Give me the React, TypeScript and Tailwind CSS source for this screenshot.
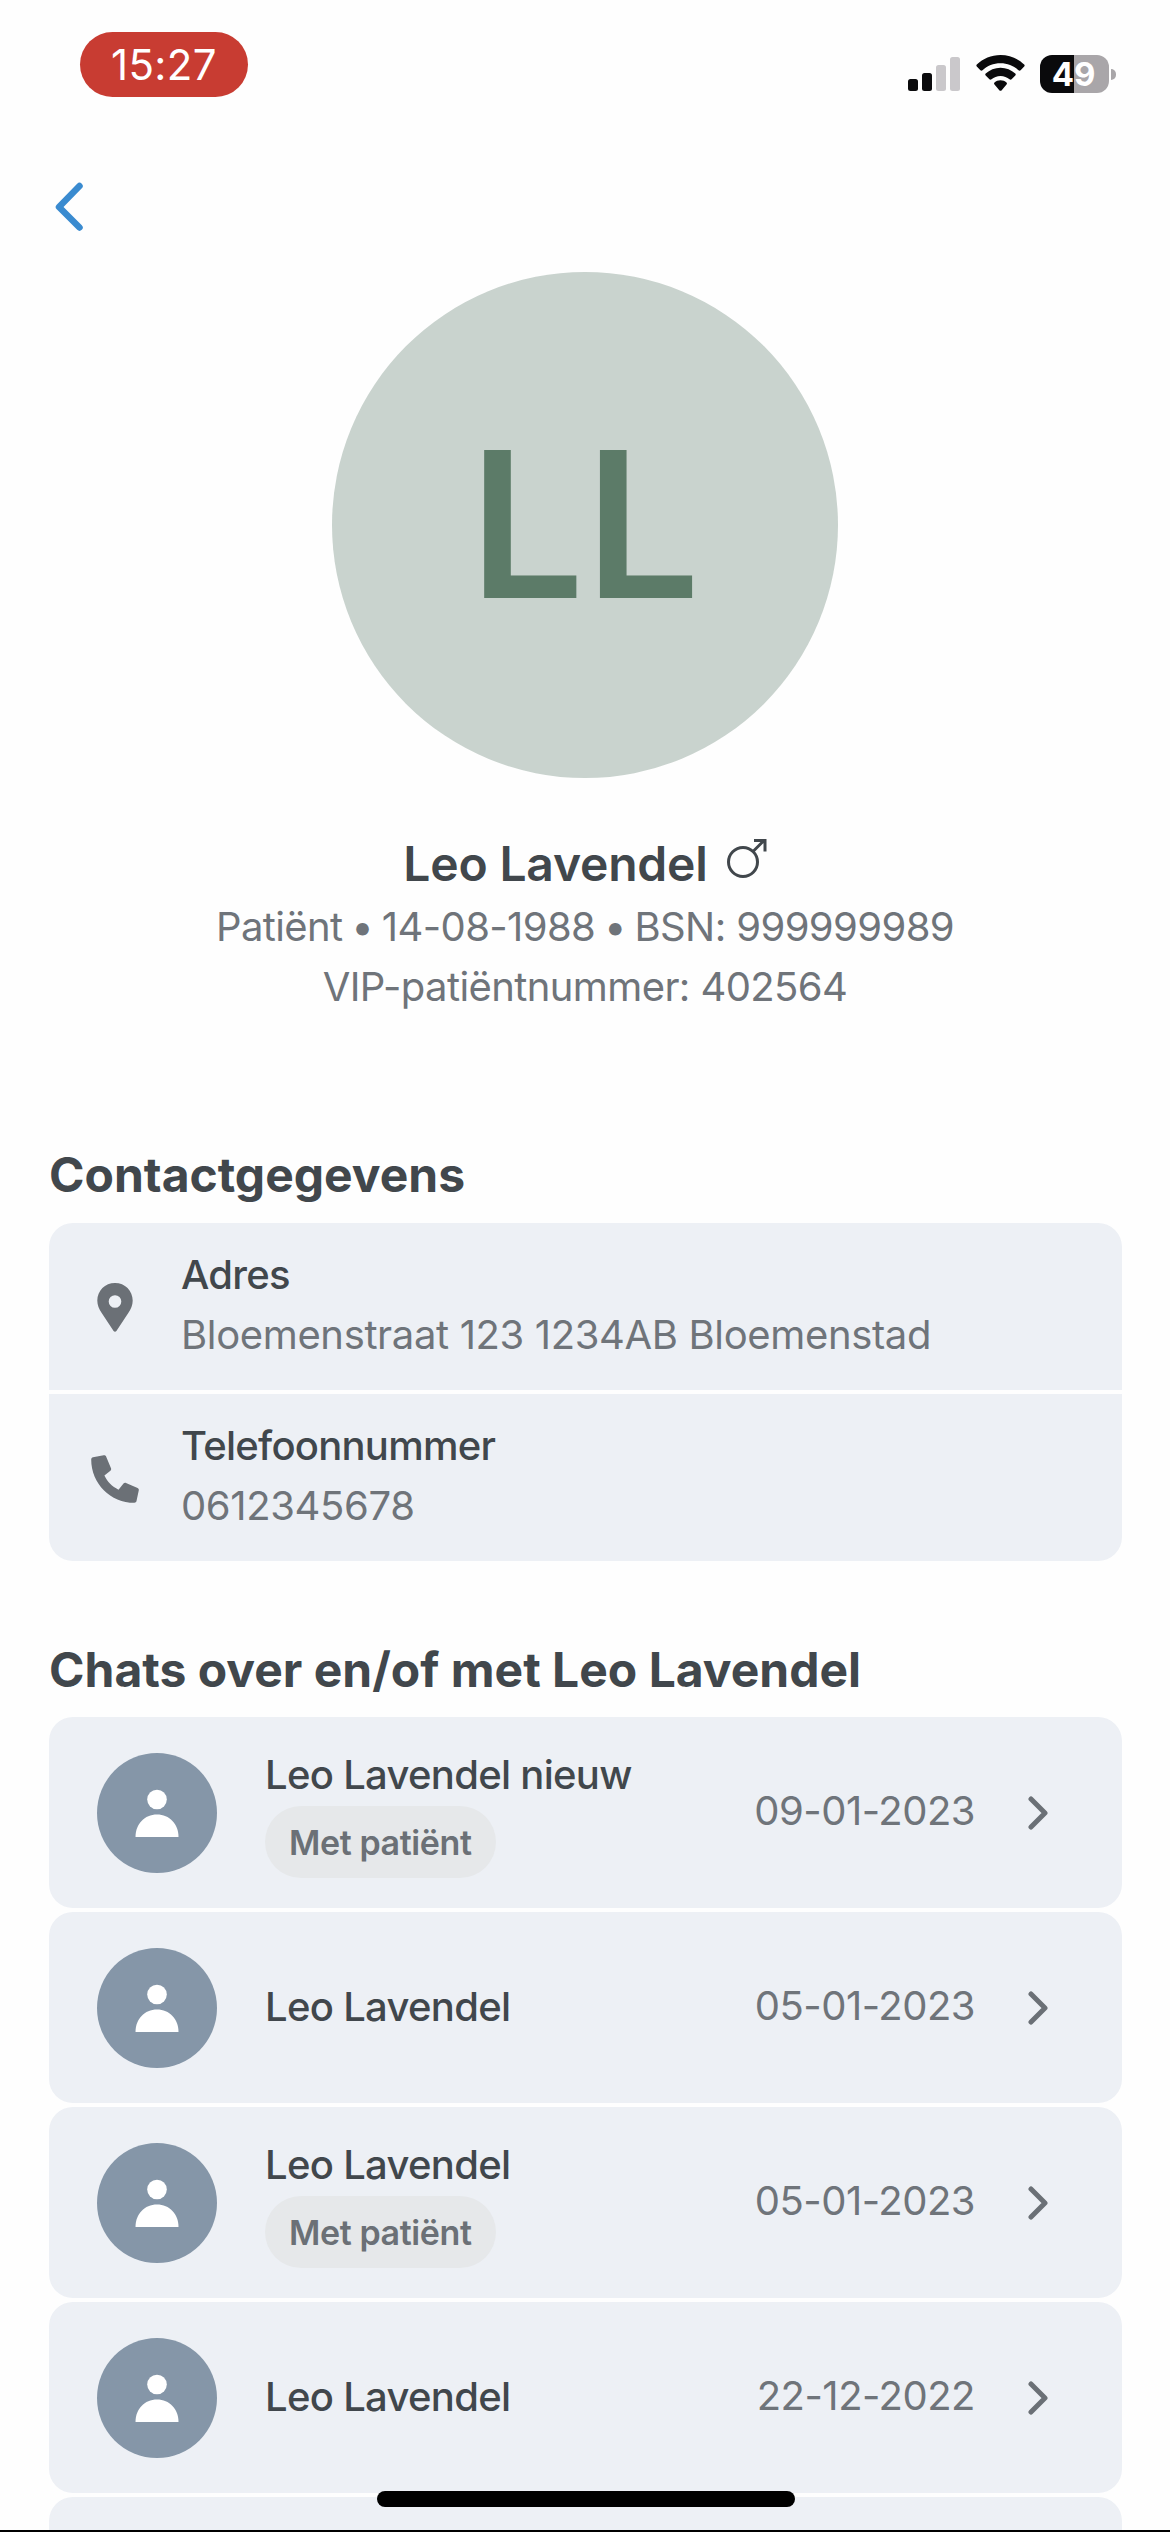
import React from 'react'

interface ContactRow {
  icon: React.ReactNode
  label: string
  value: string
}

interface Chat {
  name: string
  date: string
  withPatient: boolean
}

const LocationIcon = () => (
  <svg className="w-[36px] h-[49px]" viewBox="0 0 36 49" fill="#6b7076">
    <path
      fillRule="evenodd"
      d="M18 0C8 0 0.3 7.800 0.300 17.500c0 4.500 1.700 8.400 4.400 12.400L16.600 48c.7 1 2.100 1 2.800 0l11.900-18.100c2.700-4 4.400-7.900 4.400-12.400C35.700 7.800 28 0 18 0Zm0 12.200a6.300 6.300 0 1 1 0 12.600 6.300 6.300 0 0 1 0-12.600Z"
    />
  </svg>
)

const PhoneIcon = () => (
  <svg className="w-[48px] h-[48px]" viewBox="0 0 48 48" fill="#6b7076">
    <path d="M2 2.200 12.700 0.200c1-.2 2 .3 2.400 1.200l4.900 11.800c.4.900.1 1.900-.6 2.500l-6 4.900C16.500 27 21 31.500 27.500 34.700l5-6.100c.6-.7 1.600-1 2.500-.6l11.600 5c.9.400 1.400 1.300 1.200 2.300l-2.300 10.800c-.2 1-1.100 1.700-2.100 1.700C19.500 47.800.2 28.600.2 4.400c0-1 .8-2 1.800-2.200Z" />
  </svg>
)

const MaleIcon = () => (
  <svg className="w-[40px] h-[40px]" viewBox="0 0 40 40" fill="none" stroke="#41474c" strokeWidth="3">
    <circle cx="16" cy="24" r="14.500" />
    <path d="M26 13.500 37 2.500M27 2.500h11v11" />
  </svg>
)

const contactRows: ContactRow[] = [
  { icon: <LocationIcon />, label: 'Adres', value: 'Bloemenstraat 123 1234AB Bloemenstad' },
  { icon: <PhoneIcon />, label: 'Telefoonnummer', value: '0612345678' },
]

const chats: Chat[] = [
  { name: 'Leo Lavendel nieuw', date: '09-01-2023', withPatient: true },
  { name: 'Leo Lavendel', date: '05-01-2023', withPatient: false },
  { name: 'Leo Lavendel', date: '05-01-2023', withPatient: true },
  { name: 'Leo Lavendel', date: '22-12-2022', withPatient: false },
]

function StatusBar() {
  return (
    <div className="h-[124px] pt-[32px] pl-[80px] pr-[54px] flex items-start justify-between">
      <div className="w-[168px] h-[65px] rounded-full bg-[#c83c32] flex items-center justify-center text-[42px] tracking-[0.4px] leading-none text-white">
        15:27
      </div>
      <div className="mt-[23px] flex items-start">
        <svg className="w-[52px] h-[37px] mr-[16px]" viewBox="0 0 52 37">
          <rect x="0" y="24" width="10" height="12" rx="2.500" fill="#0a0a0c" />
          <rect x="14" y="18" width="10" height="18" rx="2.500" fill="#0a0a0c" />
          <rect x="28" y="10" width="10" height="26" rx="2.500" fill="#cac8cb" />
          <rect x="42" y="2" width="10" height="34" rx="2.500" fill="#cac8cb" />
        </svg>
        <svg className="w-[49px] h-[37px] mr-[15px]" viewBox="0 0 49 37" fill="#0a0a0c">
          <path d="M24.500 0C15.300 0 7 3.600.8 9.500c-.6.600-.6 1.500 0 2.100l3.600 3.600c.6.600 1.500.6 2.100 0 4.700-4.400 11-7 18-7s13.300 2.600 18 7c.6.600 1.500.6 2.100 0l3.600-3.600c.6-.6.600-1.500 0-2.100C42 3.600 33.700 0 24.500 0Z" />
          <path d="M24.500 12.700c-5.700 0-10.900 2.200-14.800 5.800-.6.600-.6 1.500 0 2.100l3.700 3.700c.6.600 1.500.6 2.100 0 2.400-2.100 5.500-3.400 9-3.400s6.600 1.300 9 3.400c.6.600 1.500.6 2.100 0l3.700-3.700c.6-.6.600-1.500 0-2.100-3.900-3.600-9.100-5.800-14.800-5.800Z" />
          <path d="M24.500 25.200c-2.300 0-4.400.8-6 2.200-.6.500-.6 1.400 0 2l5 6c.5.600 1.500.6 2 0l5-6c.6-.6.600-1.500 0-2-1.600-1.400-3.700-2.200-6-2.200Z" />
        </svg>
        <div className="w-[69px] h-[38px] pr-[2px] rounded-[12px] overflow-hidden bg-linear-to-r from-[#0a0a0c] from-49% to-[#a9a6a9] to-49% flex items-center justify-center text-[33px] font-bold leading-none text-white">
          49
        </div>
        <div className="mt-[14px] ml-[2px] w-[5px] h-[11px] rounded-r-full bg-[#a9a6a9]" />
      </div>
    </div>
  )
}

function PatientHeader() {
  return (
    <div className="flex flex-col items-center">
      <div className="w-[506px] h-[506px] rounded-full bg-[#c9d3ce] flex items-center justify-center text-[204px] tracking-[0.5px] font-semibold leading-none text-[#5c7b68]">
        <span className="mt-[-3px]">LL</span>
      </div>
      <div className="mt-[55px] flex items-start gap-[19px]">
        <h1 className="text-[48px] leading-[62px] font-semibold tracking-[-0.2px] text-[#41474c]">Leo Lavendel</h1>
        <div className="mt-[5px]">
          <MaleIcon />
        </div>
      </div>
      <div className="mt-[2px] text-[40px] leading-[60px] tracking-[-0.6px] text-[#6f747a] whitespace-nowrap">
        Patiënt <span className="-mx-[2px]">•</span> 14-08-1988 <span className="-mx-[2px]">•</span> BSN: 999999989
      </div>
      <div className="text-[40px] leading-[60px] tracking-[-0.6px] text-[#6f747a]">VIP-patiëntnummer: 402564</div>
    </div>
  )
}

function ContactSection() {
  return (
    <section className="mt-[128px]">
      <h2 className="text-[48px] leading-[60px] font-bold text-[#41474c]">Contactgegevens</h2>
      <div className="mt-[18px] rounded-[24px] overflow-hidden flex flex-col gap-[4px]">
        {contactRows.map((row) => (
          <div key={row.label} className="h-[167px] pb-[4px] flex items-center bg-[#edf0f5]">
            <div className="w-[132px] pt-[6px] flex justify-center">{row.icon}</div>
            <div className="text-[40px] leading-[60px]">
              <div className="font-medium tracking-[-0.75px] text-[#41474c]">{row.label}</div>
              <div className="tracking-[-0.36px] text-[#6f747a]">{row.value}</div>
            </div>
          </div>
        ))}
      </div>
    </section>
  )
}

function ChatRow({ chat }: { chat: Chat }) {
  return (
    <div className="h-[191px] shrink-0 pl-[48px] pr-[74px] flex items-center rounded-[24px] bg-[#edf0f5]">
      <div className="w-[120px] h-[120px] mr-[48px] rounded-full bg-[#8596a8] flex items-center justify-center">
        <svg className="w-[44px] h-[48px]" viewBox="0 0 44 48" fill="#fff">
          <circle cx="22" cy="10.500" r="9.800" />
          <path d="M.5 48C.5 35 9.500 25.500 22 25.500S43.500 35 43.500 48Z" />
        </svg>
      </div>
      <div className="flex-1 flex flex-col items-start gap-[1px] pb-[2px]">
        <div className="text-[40px] leading-[60px] font-medium tracking-[-0.7px] text-[#41474c]">{chat.name}</div>
        {chat.withPatient && (
          <span className="h-[72px] px-[24px] flex items-center rounded-full bg-[#e6e8ea] text-[34px] font-semibold tracking-[-0.4px] text-[#6b7076]">
            Met patiënt
          </span>
        )}
      </div>
      <div className="pb-[4px] text-[40px] leading-[60px] tracking-[-0.5px] text-[#6f747a]">{chat.date}</div>
      <svg className="w-[20px] h-[34px] ml-[53px]" viewBox="0 0 20 34" fill="none">
        <path d="M3 3 17 17 3 31" stroke="#6b7076" strokeWidth="5" strokeLinecap="round" strokeLinejoin="round" />
      </svg>
    </div>
  )
}

export default function App() {
  return (
    <div className="relative w-[1170px] h-[2532px] overflow-hidden bg-[#fefefe] font-[Inter,sans-serif]">
      <StatusBar />
      <div className="h-[148px] pt-[58px] pl-[54px]">
        <svg className="w-[30px] h-[50px]" viewBox="0 0 30 50" fill="none">
          <path d="M25.500 4 5 25 25.500 45.500" stroke="#3a8bd0" strokeWidth="6.500" strokeLinecap="round" strokeLinejoin="round" />
        </svg>
      </div>
      <PatientHeader />
      <div className="pl-[49px] pr-[48px]">
        <ContactSection />
        <section className="mt-[79px]">
          <h2 className="text-[48px] leading-[60px] font-bold text-[#41474c]">Chats over en/of met Leo Lavendel</h2>
          <div className="mt-[17px] flex flex-col gap-[4px]">
            {chats.map((chat, index) => (
              <ChatRow key={index} chat={chat} />
            ))}
            <div className="h-[191px] shrink-0 rounded-[24px] bg-[#edf0f5]" />
          </div>
        </section>
      </div>
      {/* Home indicator */}
      <div className="absolute left-[377px] top-[2491px] w-[418px] h-[16px] rounded-full bg-black" />
      <div className="absolute inset-x-0 bottom-0 h-[2px] bg-black" />
    </div>
  )
}
